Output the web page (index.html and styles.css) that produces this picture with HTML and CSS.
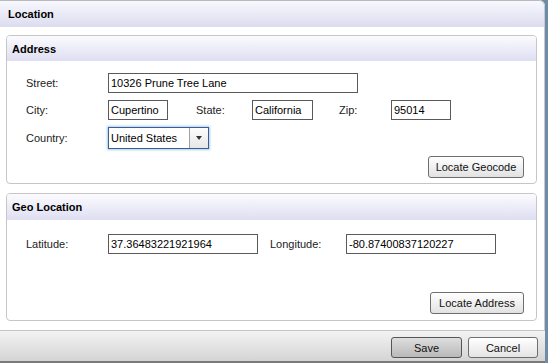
FILE: index.html
```html
<!DOCTYPE html>
<html>
<head>
<meta charset="utf-8">
<link rel="stylesheet" href="styles.css">
</head>
<body>
<div class="window">
  <div class="win-header">Location</div>
  <div class="win-body">
    <section class="panel panel-address">
      <div class="panel-header">Address</div>
      <div class="panel-content">
        <div class="row">
          <span class="label">Street:</span>
          <div class="input w-street">10326 Prune Tree Lane</div>
        </div>
        <div class="row">
          <span class="label">City:</span>
          <div class="input w-city">Cupertino</div>
          <span class="label label-state">State:</span>
          <div class="input w-state">California</div>
          <span class="label label-zip">Zip:</span>
          <div class="input w-zip">95014</div>
        </div>
        <div class="row">
          <span class="label">Country:</span>
          <div class="combo">
            <span class="combo-text">United States</span>
            <span class="combo-btn"><span class="arrow"></span></span>
          </div>
        </div>
        <div class="btn-row">
          <button class="btn btn-geocode">Locate Geocode</button>
        </div>
      </div>
    </section>
    <section class="panel panel-geo">
      <div class="panel-header">Geo Location</div>
      <div class="panel-content geo-content">
        <div class="row">
          <span class="label">Latitude:</span>
          <div class="input w-coord">37.36483221921964</div>
          <span class="label label-long">Longitude:</span>
          <div class="input w-coord">-80.87400837120227</div>
        </div>
        <div class="btn-row">
          <button class="btn btn-address">Locate Address</button>
        </div>
      </div>
    </section>
  </div>
  <div class="footer">
    <button class="btn btn-save">Save</button>
    <button class="btn btn-cancel">Cancel</button>
  </div>
</div>
</body>
</html>
```

FILE: styles.css
```css
html, body {
  margin: 0;
  padding: 0;
}
body {
  width: 548px;
  height: 363px;
  background: #6f8ca6;
  font-family: "Liberation Sans", Arial, sans-serif;
  font-size: 11px;
  color: #111;
  overflow: hidden;
}
.window {
  width: 545px;
  height: 363px;
  display: flex;
  flex-direction: column;
  background: #fff;
  border-top-right-radius: 6px;
  box-sizing: border-box;
  overflow: hidden;
}
.win-header {
  height: 27px;
  box-sizing: border-box;
  border-top: 1px solid #b8b8c0;
  border-right: 1px solid #c8c8d8;
  border-top-right-radius: 6px;
  background: linear-gradient(#f8f8fd, #dcdcf0);
  font-weight: bold;
  font-size: 11px;
  padding-left: 8px;
  display: flex;
  align-items: center;
  color: #000;
}
.win-body {
  flex: 1;
  background: #fff;
  padding: 8px 7px 9px 6px;
  display: flex;
  flex-direction: column;
  gap: 9px;
  border-right: 1px solid #c8c8d0;
}
.panel {
  border: 1px solid #c6c6c6;
  border-radius: 4px;
  display: flex;
  flex-direction: column;
  overflow: hidden;
  box-sizing: border-box;
}
.panel-address {
  height: 149px;
}
.panel-geo {
  flex: 1;
}
.panel-header {
  height: 25px;
  flex: none;
  background: linear-gradient(#fbfbfe, #dedef2);
  font-weight: bold;
  display: flex;
  align-items: center;
  padding-left: 5px;
  color: #000;
}
.panel-geo .panel-header {
  height: 26px;
}
.panel-content {
  flex: 1;
  display: flex;
  flex-direction: column;
  gap: 7px;
  padding: 12px 12px 6px 19px;
}
.geo-content {
  padding-top: 14px;
  padding-bottom: 6px;
}
.row {
  display: flex;
  align-items: center;
}
.label {
  width: 82px;
  flex: none;
  color: #222;
}
.label-state {
  width: 56px;
  margin-left: 28px;
}
.label-zip {
  width: 52px;
  margin-left: 26px;
}
.label-long {
  width: 76px;
  margin-left: 12px;
}
.input {
  height: 20px;
  box-sizing: border-box;
  border: 1px solid #5a5a5a;
  background: #fff;
  padding-left: 2px;
  display: flex;
  align-items: center;
  white-space: nowrap;
  overflow: hidden;
  color: #000;
}
.w-street { width: 250px; }
.w-city { width: 60px; }
.w-state { width: 61px; }
.w-zip { width: 60px; }
.w-coord { width: 150px; }
.combo {
  width: 101px;
  height: 22px;
  box-sizing: border-box;
  border: 1px solid #3c5f8c;
  box-shadow: 0 0 2px 1px #a9cdf2;
  display: flex;
  background: #fff;
}
.combo-text {
  flex: 1;
  display: flex;
  align-items: center;
  padding-left: 2px;
  color: #000;
}
.combo-btn {
  width: 18px;
  border-left: 1px solid #a0a0a0;
  background: linear-gradient(#fdfdfd, #e6e6e6);
  display: flex;
  align-items: center;
  justify-content: center;
}
.arrow {
  width: 0;
  height: 0;
  border-left: 3px solid transparent;
  border-right: 3px solid transparent;
  border-top: 4px solid #333;
}
.btn-row {
  margin-top: auto;
  display: flex;
  justify-content: flex-end;
}
.btn {
  font-family: "Liberation Sans", Arial, sans-serif;
  font-size: 11px;
  color: #111;
  height: 22px;
  box-sizing: border-box;
  border: 1px solid #6e6e6e;
  border-radius: 3px;
  background: linear-gradient(#ffffff, #e2e2e2);
  padding: 0;
  margin: 0;
}
.btn-geocode { width: 96px; }
.btn-address { width: 94px; }
.footer {
  height: 33px;
  box-sizing: border-box;
  border-top: 1px solid #c4c4c4;
  border-bottom: 2px solid #7a7a7a;
  background: linear-gradient(#f3f3f3, #d4d4d4);
  display: flex;
  justify-content: flex-end;
  align-items: flex-start;
  gap: 6px;
  padding-top: 6px;
  padding-right: 7px;
}
.btn-save {
  width: 71px;
  height: 21px;
  background: linear-gradient(#dedede, #b9b9b9);
  border-color: #555;
}
.btn-cancel {
  width: 70px;
  height: 21px;
  background: linear-gradient(#ffffff, #e4e4e4);
}
```
